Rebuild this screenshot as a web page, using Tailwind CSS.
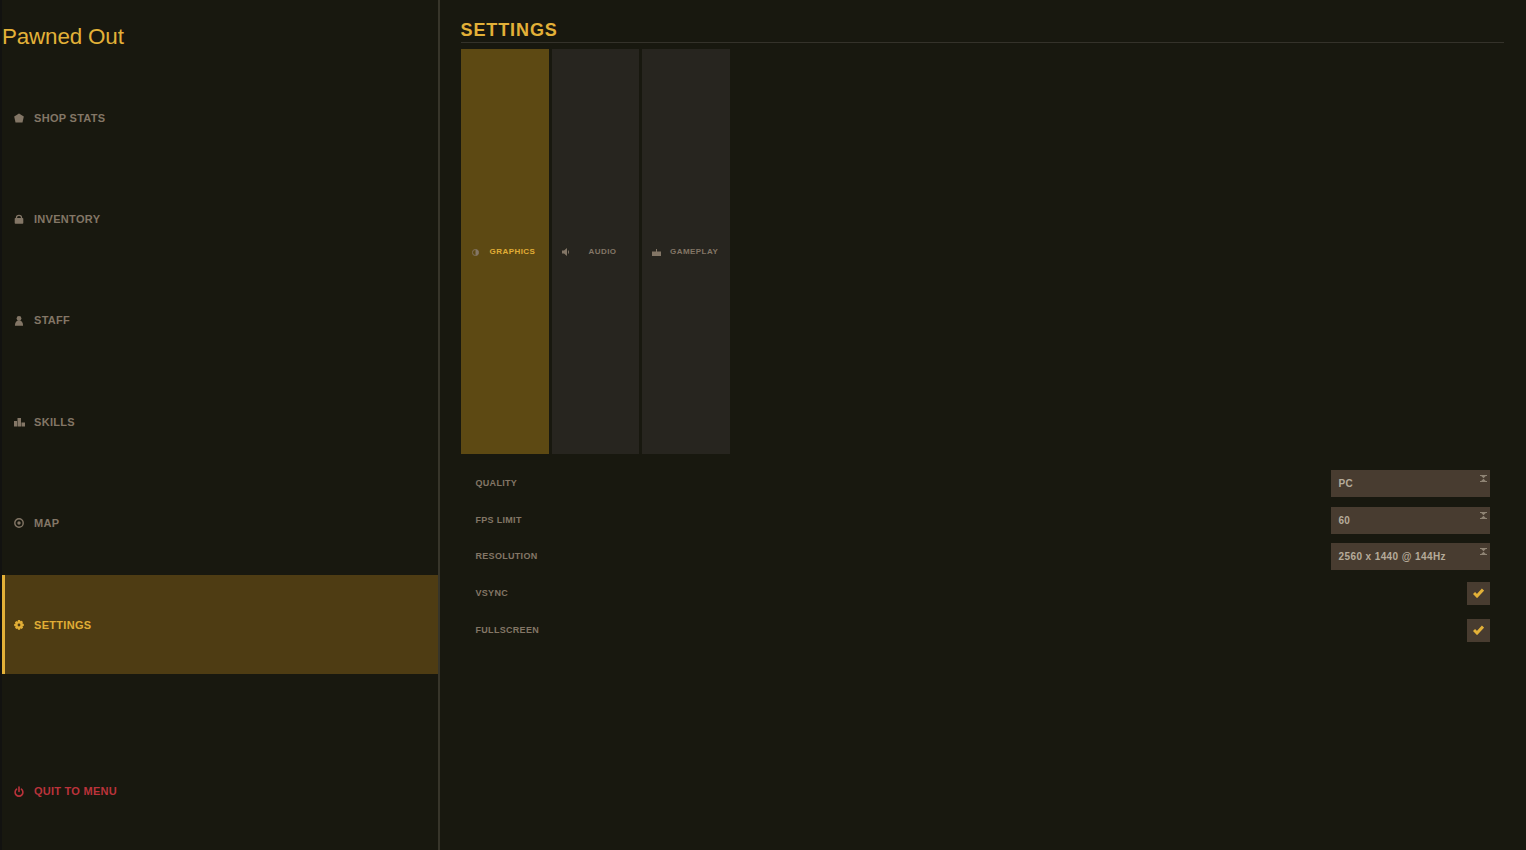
<!DOCTYPE html>
<html><head><meta charset="utf-8"><script src="https://cdn.jsdelivr.net/npm/@tailwindcss/browser@4"></script></head>
<body class="m-0 bg-[#18180f] font-['Liberation_Sans',Arial,sans-serif]">
<div class="flex h-[850px] w-[1526px] overflow-hidden bg-[#18180f]">
<div class="w-[2px] shrink-0 bg-[#121210]"></div>
<aside class="flex h-full w-[437.500px] shrink-0 flex-col border-r-2 border-[#37352a]">
  <h1 class="h-[68.400px] pt-[23px] text-[22.400px] leading-[28px] tracking-[-0.150px] text-[#e3b138]">Pawned Out</h1>
  <nav class="flex flex-col gap-[2.400px] text-[11px] font-bold tracking-[0.300px] text-[#837666]">
    <a class="flex h-[99px] items-center pl-[12px]"><svg class="mr-[10px] h-[10px] w-[10px]" viewBox="0 0 10 10" fill="#837666"><path d="M5 .5 9.800 3.400 8.500 9.500h-7L.2 3.400z"/></svg>SHOP STATS</a>
    <a class="flex h-[99px] items-center pl-[12px]"><svg class="mr-[10px] h-[10px] w-[10px]" viewBox="0 0 10 10" fill="#837666"><path d="M1.500 4h7a.8.8 0 0 1 .8.8v4.200a.8.8 0 0 1-.8.8h-7a.8.8 0 0 1-.8-.8V4.800a.8.8 0 0 1 .8-.8zM1.800 4a3.200 3.200 0 0 1 6.400 0H7a2 2 0 0 0-4 0z"/></svg>INVENTORY</a>
    <a class="flex h-[99px] items-center pl-[12px]"><svg class="mr-[10px] h-[10px] w-[10px]" viewBox="0 0 10 10" fill="#837666"><circle cx="5" cy="2.500" r="2.400"/><path d="M.9 9.800C.9 6.500 2.500 4.600 5 4.600s4.100 1.900 4.100 5.200z"/></svg>STAFF</a>
    <a class="flex h-[99px] items-center pl-[12px]"><svg class="mr-[9px] h-[10px] w-[11px]" viewBox="0 0 11 10" fill="#837666"><path d="M0 4h3v5.500H0zM3.500 1h3.500v8.500H3.500zM7.500 5.500H11v4H7.500z"/></svg>SKILLS</a>
    <a class="flex h-[99px] items-center pl-[12px]"><svg class="mr-[10px] h-[10px] w-[10px]" viewBox="0 0 10 10" fill="none" stroke="#837666"><circle cx="5" cy="5" r="4.200" stroke-width="1.400"/><circle cx="5" cy="5" r="1.700" fill="#837666" stroke="none"/></svg>MAP</a>
    <a class="flex h-[99px] items-center border-l-[3px] border-[#e3b138] bg-[#4e3c13] pl-[9px] text-[#e1ae36]"><svg class="mr-[10px] h-[10px] w-[10px]" viewBox="0 0 10 10"><path fill="#e1ae36" fill-rule="evenodd" d="M4 0h2l.3 1.300 1.200-.6 1.500 1.400-.7 1.200L9.800 4v2l-1.300.3.6 1.200-1.400 1.500-1.200-.7L6 9.800H4l-.3-1.300-1.200.6L1 7.700l.7-1.200L.2 6V4l1.300-.3-.6-1.200L2.300 1l1.200.7zM5 3.600a1.400 1.400 0 1 0 0 2.800 1.400 1.400 0 0 0 0-2.800z"/></svg>SETTINGS</a>
  </nav>
  <a class="mt-[108.600px] flex items-center pl-[12px] text-[11px] font-bold tracking-[0.250px] text-[#bb333b]"><svg class="mr-[10px] h-[11px] w-[10px]" viewBox="0 0 10 11" fill="none" stroke="#bb333b" stroke-width="1.600" stroke-linecap="round"><path d="M5 1v4.500M2.600 3.200a3.900 3.900 0 1 0 4.800 0"/></svg>QUIT TO MENU</a>
</aside>
<main class="min-w-0 flex-1 pl-[21px] pr-[22px]">
  <div class="h-[43px] border-b border-[#34322a]">
    <h2 class="pt-[19.500px] text-[18px] leading-[20px] font-bold tracking-[0.900px] text-[#e3b138]">SETTINGS</h2>
  </div>
  <div class="mt-[6px] flex h-[404.500px] gap-[3px] text-[8px] font-bold tracking-[0.450px] text-[#837666]">
    <div class="flex w-[88px] items-center bg-[#5d4913] pt-[1.500px] pl-[11px] text-[#e1ae36]"><svg class="mr-[11px] h-[7px] w-[7px]" viewBox="0 0 8 8"><circle cx="4" cy="4" r="3.500" fill="none" stroke="#837666" stroke-width="1"/><path d="M4 .5a3.500 3.500 0 0 1 0 7z" fill="#837666"/></svg>GRAPHICS</div>
    <div class="flex w-[87.500px] items-center bg-[#27251f] pt-[1.500px] pl-[10px]"><svg class="mr-[18px] h-[8px] w-[9px]" viewBox="0 0 9 8" fill="#837666"><path d="M0 2.500h2L5 0v8L2 5.500H0zM6 2a2.500 2.500 0 0 1 0 4z"/></svg>AUDIO</div>
    <div class="flex w-[87.500px] items-center bg-[#27251f] pt-[1.500px] pl-[10px]"><svg class="mr-[9px] h-[7px] w-[9px]" viewBox="0 0 9 7" fill="#837666"><path d="M0 2.500h9V7H0zM4 0h1v2.500H4z"/></svg>GAMEPLAY</div>
  </div>
  <div class="mt-[16px] flex flex-col gap-[9px] pl-[15px] pr-[14px] text-[9px] font-bold tracking-[0.300px] text-[#837666]">
    <div class="flex h-[27.700px] items-center justify-between"><span>QUALITY</span><div class="relative flex h-[27px] w-[159px] items-center bg-[#483c30] pl-[7.500px] text-[10px] text-[#b6ab9a]">PC<svg class="absolute top-[5px] right-[3px] h-[7px] w-[7px]" viewBox="0 0 7 7" fill="#8f8474"><path d="M0 0h7v1H5.800L3.500 3.300 1.200 1H0zM3.500 3.700 5.800 6H7v1H0V6h1.200z"/></svg></div></div>
    <div class="flex h-[27.700px] items-center justify-between"><span class="pt-[1px]">FPS LIMIT</span><div class="relative flex h-[27px] w-[159px] items-center bg-[#483c30] pl-[7.500px] text-[10px] text-[#b6ab9a]">60<svg class="absolute top-[5px] right-[3px] h-[7px] w-[7px]" viewBox="0 0 7 7" fill="#8f8474"><path d="M0 0h7v1H5.800L3.500 3.300 1.200 1H0zM3.500 3.700 5.800 6H7v1H0V6h1.200z"/></svg></div></div>
    <div class="flex h-[27.700px] items-center justify-between"><span class="pt-[1px]">RESOLUTION</span><div class="relative flex h-[27px] w-[159px] items-center bg-[#483c30] pl-[7.500px] text-[10px] tracking-[0.400px] text-[#b6ab9a]">2560 x 1440 @ 144Hz<svg class="absolute top-[5px] right-[3px] h-[7px] w-[7px]" viewBox="0 0 7 7" fill="#8f8474"><path d="M0 0h7v1H5.800L3.500 3.300 1.200 1H0zM3.500 3.700 5.800 6H7v1H0V6h1.200z"/></svg></div></div>
    <div class="flex h-[27.700px] items-center justify-between"><span>VSYNC</span><div class="flex h-[23px] w-[23px] items-center justify-center bg-[#483c30]"><svg class="h-[10px] w-[11px]" viewBox="0 0 11 10" fill="none" stroke="#e3b138" stroke-width="3"><path d="M1 5l3 3 6-6.500"/></svg></div></div>
    <div class="flex h-[27.700px] items-center justify-between"><span class="pt-[1px]">FULLSCREEN</span><div class="flex h-[23px] w-[23px] items-center justify-center bg-[#483c30]"><svg class="h-[10px] w-[11px]" viewBox="0 0 11 10" fill="none" stroke="#e3b138" stroke-width="3"><path d="M1 5l3 3 6-6.500"/></svg></div></div>
  </div>
</main>
</div>
</body></html>
